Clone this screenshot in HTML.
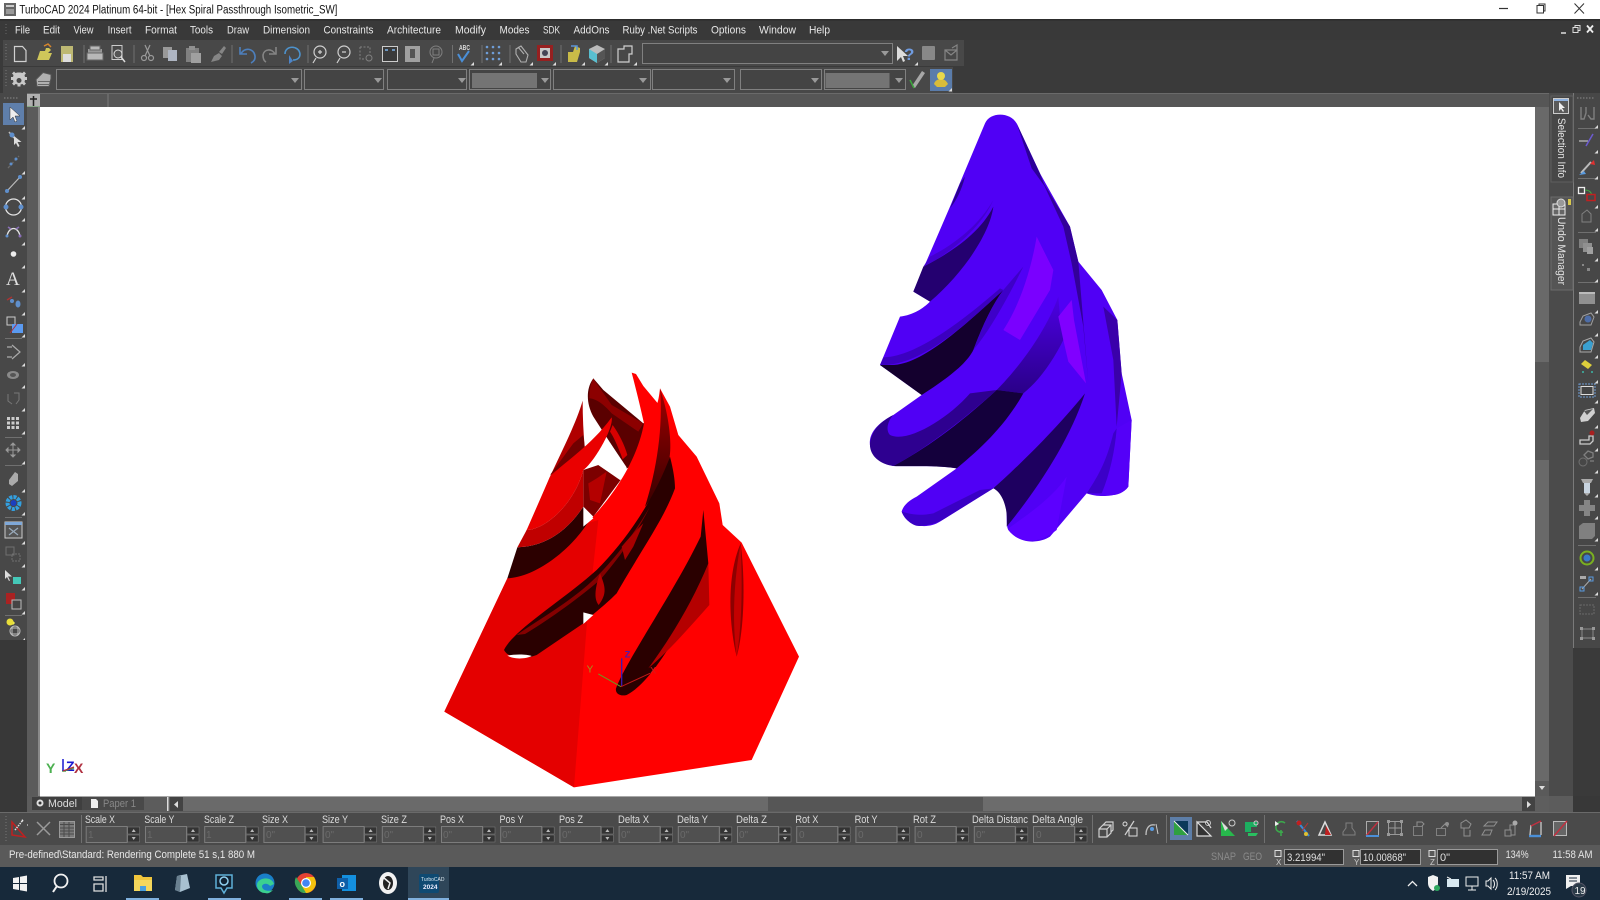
<!DOCTYPE html>
<html><head><meta charset="utf-8"><title>TurboCAD</title>
<style>
html,body{margin:0;padding:0;background:#3a3a3a;width:1600px;height:900px;overflow:hidden}
svg{display:block;font-family:"Liberation Sans",sans-serif;filter:blur(.35px)}
.m{font-size:11px;fill:#e8e8e8}
.l{font-size:11px;fill:#dcdcdc}
.d{font-size:10px;fill:#6a6a6a}
.s{stroke:#d0d0d0;fill:none;stroke-width:1.2}
.g{stroke:#9a9a9a;fill:none;stroke-width:1.2}
.sep{stroke:#707070;stroke-width:1}
.cb{fill:#444;stroke:#808080;stroke-width:1}
.in{fill:#505050;stroke:#7c7c7c;stroke-width:1}
.sp{fill:#333;stroke:#777;stroke-width:.6}
</style></head><body>
<svg width="1600" height="900" viewBox="0 0 1600 900" xmlns="http://www.w3.org/2000/svg">
<defs>
<path id="t" d="M0 0l-3.500 3.500h3.500z" fill="#ddd"/>
<g id="f"><rect class="in" x="0.500" y="0.500" width="41" height="16"/><rect class="sp" x="42" y="1" width="12" height="7"/><rect class="sp" x="42" y="9" width="12" height="7"/><path d="M48 3l-2 3h4zM48 14l-2-3h4z" fill="#bbb"/></g>
<path id="dn" d="M0 0h8l-4 5z" fill="#999"/>
<linearGradient id="pb" x1="0" y1="0" x2="0" y2="1"><stop offset="0" stop-color="#4c00e4"/><stop offset="1" stop-color="#2a0088"/></linearGradient>
<linearGradient id="rs" x1="0" y1="0" x2="0" y2="1"><stop offset="0" stop-color="#a00000"/><stop offset=".5" stop-color="#6a0000"/><stop offset="1" stop-color="#3a0000"/></linearGradient>
</defs>
<!-- base -->
<rect width="1600" height="900" fill="#3a3a3a"/>
<rect width="1600" height="19" fill="#fff"/>
<rect x="4" y="3" width="12" height="13" fill="#666"/><rect x="6" y="5" width="8" height="2" fill="#ccc"/><rect x="6" y="9" width="8" height="5" fill="#999"/>
<text x="19.400" y="13.500" font-size="11.500" fill="#111" textLength="318" lengthAdjust="spacingAndGlyphs">TurboCAD 2024 Platinum 64-bit - [Hex Spiral Passthrough Isometric_SW]</text>
<path d="M1499 8.500h9" stroke="#333" stroke-width="1.200"/>
<rect x="1537" y="5.500" width="6.500" height="7.500" fill="none" stroke="#333"/><path d="M1539 5.500v-1.500h6v7h-1.500" fill="none" stroke="#333"/>
<path d="M1574.500 3.500l9.500 10M1584 3.500l-9.500 10" stroke="#333"/>
<!-- menu -->
<rect y="19" width="1600" height="21" fill="#393939"/>
<rect y="19" width="1600" height="1.500" fill="#2c2c2c"/>
<path d="M6 24v12" stroke="#666" stroke-dasharray="1 2"/>
<g class="m">
<text x="15" y="33.500" textLength="15" lengthAdjust="spacingAndGlyphs">File</text>
<text x="43" y="33.500" textLength="17" lengthAdjust="spacingAndGlyphs">Edit</text>
<text x="73.500" y="33.500" textLength="20" lengthAdjust="spacingAndGlyphs">View</text>
<text x="107.600" y="33.500" textLength="24" lengthAdjust="spacingAndGlyphs">Insert</text>
<text x="145" y="33.500" textLength="32" lengthAdjust="spacingAndGlyphs">Format</text>
<text x="190" y="33.500" textLength="23" lengthAdjust="spacingAndGlyphs">Tools</text>
<text x="227" y="33.500" textLength="22" lengthAdjust="spacingAndGlyphs">Draw</text>
<text x="263" y="33.500" textLength="47" lengthAdjust="spacingAndGlyphs">Dimension</text>
<text x="323.500" y="33.500" textLength="50" lengthAdjust="spacingAndGlyphs">Constraints</text>
<text x="387" y="33.500" textLength="54" lengthAdjust="spacingAndGlyphs">Architecture</text>
<text x="455" y="33.500" textLength="31" lengthAdjust="spacingAndGlyphs">Modify</text>
<text x="499.500" y="33.500" textLength="30" lengthAdjust="spacingAndGlyphs">Modes</text>
<text x="543" y="33.500" textLength="17" lengthAdjust="spacingAndGlyphs">SDK</text>
<text x="573.500" y="33.500" textLength="36" lengthAdjust="spacingAndGlyphs">AddOns</text>
<text x="622.500" y="33.500" textLength="75" lengthAdjust="spacingAndGlyphs">Ruby .Net Scripts</text>
<text x="711" y="33.500" textLength="35" lengthAdjust="spacingAndGlyphs">Options</text>
<text x="759" y="33.500" textLength="37" lengthAdjust="spacingAndGlyphs">Window</text>
<text x="809" y="33.500" textLength="21" lengthAdjust="spacingAndGlyphs">Help</text>
</g>
<path d="M1561 33h5" stroke="#ddd" stroke-width="1.500"/>
<rect x="1573" y="27.500" width="5" height="5" fill="none" stroke="#ddd"/><path d="M1575 27.500v-2h5v5h-2" fill="none" stroke="#ddd"/>
<path d="M1587 25.500l6 7M1593 25.500l-6 7" stroke="#eee" stroke-width="1.800"/>
<!-- toolbar rows -->
<rect x="3" y="40" width="961" height="26" fill="#484848"/>
<rect x="3" y="67" width="950" height="26" fill="#484848"/>
<path d="M6 44v18M6 70v18" stroke="#777" stroke-dasharray="1 2"/>
<!-- row1 icons -->
<path class="s" d="M14.500 46.500h8l3.500 4v11h-11.500z"/>
<path d="M37 60l3-9h5l1-3h3l2 2-3 3h4l-3 7z" fill="#cfc65a"/><path d="M44 46l4-2 3 3" stroke="#d8862c" fill="none" stroke-width="1.500"/>
<rect x="61" y="46" width="12" height="16" fill="#bdb873"/><rect x="63" y="54" width="8" height="8" fill="#ddd"/>
<path d="M88 49h14v5h-14z" fill="#999"/><path d="M90 46h10v4h-10zM87 53h16v7h-16z" fill="#b8b8b8" stroke="#666"/>
<rect x="112" y="45.500" width="10" height="14" fill="none" stroke="#ccc"/><circle cx="118" cy="54" r="4" fill="#555" stroke="#ddd"/><path d="M121 57l4 5" stroke="#ddd" stroke-width="1.500"/>
<g class="g"><circle cx="144" cy="58" r="2.500"/><circle cx="151" cy="58" r="2.500"/><path d="M145 56l5-11M150 56l-5-11"/></g>
<rect x="163" y="47" width="9" height="11" fill="#999"/><rect x="168" y="50" width="9" height="11" fill="#aeb5c2"/>
<rect x="186" y="48" width="13" height="14" fill="#808080"/><rect x="191" y="53" width="10" height="10" fill="#a0a0a0"/><rect x="189" y="46" width="6" height="4" fill="#909090"/>
<path d="M211 62l3-6 5-3 3 3-3 4zM219 52l5-6 2 2-4 6z" fill="#858585"/>
<path d="M240 47v7h7M241 54c3-7 13-6 14 2 .5 4-2 6-4 7" fill="none" stroke="#4d7fbc" stroke-width="1.600"/>
<path d="M276 47v7h-7M275 54c-3-6-11-5-12 1 0 4 1 6 3 7" fill="none" stroke="#858585" stroke-width="1.600"/>
<path d="M285 54c0-9 14-9 15 0 0 4-3 6-7 6" fill="none" stroke="#4d92cc" stroke-width="1.600"/><path d="M289 55l4 6-4 3z" fill="#4d84c8"/>
<g class="s"><circle cx="320" cy="52" r="6"/><path d="M316 58l-3 5M318 52h4M320 50v4"/><circle cx="344" cy="52" r="6"/><path d="M340 58l-3 5M342 52h4"/></g>
<path d="M360 47h10v6M360 47v12h5" fill="none" stroke="#808080" stroke-dasharray="2 1.500"/><circle cx="369" cy="58" r="3" fill="none" stroke="#808080"/>
<rect x="382.500" y="46.500" width="15" height="15" fill="#3a3a3a" stroke="#ccc"/><path d="M385 50h3M392 50h3" stroke="#7db3ea" stroke-width="1.500"/>
<rect x="405" y="46" width="15" height="16" fill="#a0a0a0"/><rect x="410" y="49" width="5" height="9" fill="#555"/>
<circle cx="436" cy="52" r="6" fill="none" stroke="#808080"/><rect x="433" y="49" width="6" height="6" fill="none" stroke="#808080"/><path d="M434 58l-2 5" stroke="#808080"/>
<text x="459" y="50" font-size="7" font-weight="bold" fill="#ddd" textLength="11" lengthAdjust="spacingAndGlyphs">ABC</text>
<path d="M458 54l4 7 7-10" fill="none" stroke="#4a8fd8" stroke-width="2"/>
<g fill="#6f9dd6"><circle cx="487" cy="47" r="1.300"/><circle cx="493" cy="47" r="1.300"/><circle cx="499" cy="47" r="1.300"/><circle cx="487" cy="53" r="1.300"/><circle cx="493" cy="53" r="1.300"/><circle cx="499" cy="53" r="1.300"/><circle cx="487" cy="59" r="1.300"/><circle cx="493" cy="59" r="1.300"/><circle cx="499" cy="59" r="1.300"/></g>
<path d="M516 49l5-3 7 9-2 7h-5l-5-8zM518 47l6 7" fill="none" stroke="#b0b0b0" stroke-width="1.100"/>
<rect x="537" y="45" width="16" height="16" fill="#962020"/><rect x="540" y="48" width="10" height="10" fill="#c8c8c8"/><circle cx="545" cy="53" r="3" fill="#445"/>
<path d="M568 52h5l2-6 5 2v4l-3 10h-9z" fill="#c9bb48"/><path d="M571 46h6v4" stroke="#5a94d8" fill="none" stroke-width="1.500"/>
<path d="M597 45l8 4v9l-8 5-8-5v-9z" fill="#bbb"/><path d="M597 54l-8-5v9l8 5z" fill="#58bfd0"/><path d="M597 54v9l8-5v-9z" fill="#555"/>
<path class="s" d="M618 49h6v-3h8v8h-3v8h-11z"/>
<g><use href="#t" x="474" y="62"/><use href="#t" x="502" y="62"/><use href="#t" x="533" y="62"/><use href="#t" x="556" y="62"/><use href="#t" x="585" y="62"/><use href="#t" x="608" y="62"/><use href="#t" x="637" y="62"/><use href="#t" x="918" y="62"/></g>
<g class="sep"><path d="M84 45v18M134 45v18M232 45v18M308 45v18M452.500 45v18M482 45v18M510 45v18M561 45v18M611 45v18"/></g>
<rect x="642.500" y="43.500" width="250" height="20" class="cb"/><use href="#dn" x="881" y="51"/>
<path d="M897 46v15l4-4 2 5 2-1-2-5h5z" fill="#ddd"/>
<text x="904" y="60" font-size="17" font-weight="bold" fill="#6f9be0">?</text>
<rect x="922" y="46" width="13" height="14" rx="1" fill="#888"/>
<path d="M945 50h12v10h-12zM945 50l6 5 6-5M952 48l5-3v5" fill="none" stroke="#858585" stroke-width="1.200"/>
<!-- row2 -->
<g transform="translate(0 1.500)"><path d="M19.500 72l2 .5 1.500-1.500 2 2-1.500 1.500.5 2 2 0v3l-2 0-.5 2 1.500 1.500-2 2-1.500-1.500-2 .5v2h-3v-2l-2-.5-1.500 1.500-2-2 1.500-1.500-.5-2h-2v-3h2l.5-2-1.500-1.500 2-2 1.500 1.500 2-.5z" fill="#c8c8c8" transform="translate(1 -1)"/><circle cx="19" cy="79" r="2.500" fill="#484848"/>
<path d="M36 78l7-7 8 2v4l-2 8h-12z" fill="#b0b0b0" stroke="#555"/><path d="M38 80h12M38 83h12" stroke="#666"/></g>
<rect class="cb" x="56.500" y="69.500" width="245" height="20"/><use href="#dn" x="291" y="78"/>
<rect class="cb" x="304.500" y="69.500" width="79" height="20"/><use href="#dn" x="374" y="78"/>
<rect class="cb" x="387.500" y="69.500" width="79" height="20"/><use href="#dn" x="458" y="78"/>
<rect class="cb" x="469.500" y="69.500" width="81" height="20"/><rect x="472" y="73" width="65" height="15" fill="#747474"/><use href="#dn" x="541" y="78"/>
<rect class="cb" x="553.500" y="69.500" width="97" height="20"/><use href="#dn" x="639" y="78"/>
<rect class="cb" x="652.500" y="69.500" width="82" height="20"/><use href="#dn" x="723" y="78"/>
<rect class="cb" x="740.500" y="69.500" width="81" height="20"/><use href="#dn" x="811" y="78"/>
<rect class="cb" x="824.500" y="69.500" width="81" height="20"/><rect x="825.500" y="73" width="64" height="15" fill="#747474"/><use href="#dn" x="895" y="78"/>
<path d="M912 86l10-15 3 2-10 15z" fill="#a8a8a8"/><path d="M910 80l4 8" stroke="#3ca83c" stroke-width="1.500"/>
<rect x="930" y="69" width="22" height="22" fill="#5a7cab"/><path d="M934 84c1-4 5-5 7-5s5 1 7 5l-3 3h-8z" fill="#d8bc3a"/><circle cx="941" cy="76" r="4" fill="#e8d84c"/><use href="#t" x="952" y="88"/>
<!-- ruler strip -->
<rect y="94" width="1600" height="13" fill="#565656"/>
<rect y="93" width="1600" height="1" fill="#6a6a6a"/>
<path d="M108 94v13" stroke="#7a7a7a"/>
<rect x="27" y="94" width="13" height="13" fill="#b0b0b0"/><path d="M33.500 96v10M30 99h7" stroke="#222" stroke-width="1.500"/>
<path d="M27 107h13" stroke="#5ca05c"/>
<!-- left toolbar -->
<rect x="0" y="93" width="27" height="547" fill="#484848"/>
<rect x="27" y="107" width="13" height="689" fill="#5b5b5b"/>
<rect x="38" y="107" width="2" height="689" fill="#8a8a8a"/>
<path d="M4 98h14" stroke="#888" stroke-dasharray="1.500 1.500"/>
<rect x="3" y="103" width="21" height="22" fill="#5f7fab"/>
<path d="M10 107v13l3-3 2 5 2-1-2-5h5z" fill="#eee" stroke="#333" stroke-width=".5"/>
<path d="M9 132l5 6" stroke="#bbb" stroke-width="1.500"/><circle cx="12" cy="135" r="2.500" fill="#5f8fcc"/><path d="M14 136v9l2-2 2 4 1.500-1-2-4h4z" fill="#ddd"/>
<path d="M8 168l11-12" stroke="#6a6a6a" stroke-dasharray="3 2" stroke-width="1.300"/><circle cx="11" cy="164" r="1.500" fill="#5f8fcc"/><circle cx="16" cy="159" r="1.500" fill="#5f8fcc"/>
<path d="M7 191l13-14" stroke="#bbb" stroke-width="1.200"/><circle cx="7" cy="191" r="2" fill="#5f8fcc"/><circle cx="20" cy="177" r="2" fill="#5f8fcc"/>
<circle cx="13.500" cy="207" r="8" fill="none" stroke="#e4e4e4" stroke-width="1.300"/><circle cx="6" cy="207" r="2.500" fill="#5f8fcc"/><circle cx="21" cy="207" r="2.500" fill="#5f8fcc"/>
<path d="M7 236c2-10 11-10 13 0" fill="none" stroke="#e4e4e4" stroke-width="1.300"/><path d="M8 227l3 2M19 227l-3 2" stroke="#8a6fb8" stroke-width="1.600"/><circle cx="7" cy="236" r="1.500" fill="#5f8fcc"/><circle cx="20" cy="236" r="1.500" fill="#8a6fb8"/>
<circle cx="13.500" cy="254" r="2.800" fill="#eee"/>
<text x="6" y="285" font-family="Liberation Serif" font-size="19" fill="#e0e0e0">A</text>
<path d="M7 300l5-3" stroke="#a33" stroke-width="1.500"/><circle cx="12" cy="301" r="2" fill="#5f8fcc"/><ellipse cx="18" cy="304" rx="2.500" ry="3.500" fill="#5f8fcc"/>
<rect x="7" y="317" width="8" height="8" fill="none" stroke="#ccc"/><rect x="12" y="324" width="11" height="9" fill="#5b9af0"/><path d="M10 333l7-9" stroke="#b03040"/>
<path class="sep" d="M5 338.500h17M5 437.500h17M5 465.500h17M5 517.500h17M5 615.500h17"/>
<path d="M12 345l8 7-8 7M7 347h5M7 357h5" fill="none" stroke="#aaa" stroke-width="1.200"/>
<ellipse cx="13" cy="375" rx="6" ry="4" fill="#8a8a8a"/><ellipse cx="13" cy="375" rx="3" ry="2" fill="#555"/>
<path d="M8 394v7l4 3M14 393h5v7l-3 4" fill="none" stroke="#777"/>
<g fill="#ccc"><rect x="7" y="417" width="3" height="3"/><rect x="11.500" y="417" width="3" height="3"/><rect x="16" y="417" width="3" height="3"/><rect x="7" y="421.500" width="3" height="3"/><rect x="11.500" y="421.500" width="3" height="3"/><rect x="16" y="421.500" width="3" height="3"/><rect x="7" y="426" width="3" height="3"/><rect x="11.500" y="426" width="3" height="3"/><rect x="16" y="426" width="3" height="3"/></g>
<path d="M13 443v14M6 450h14M13 443l-2 2h4zM13 457l-2-2h4zM6 450l2-2v4zM20 450l-2-2v4z" stroke="#999" fill="#999"/>
<path d="M9 480l6-8 3 2v7l-6 5-3-2z" fill="#aaa"/>
<circle cx="13.500" cy="503" r="6" fill="none" stroke="#33a0e0" stroke-width="4" stroke-dasharray="3 1"/><circle cx="13.500" cy="503" r="3" fill="#1c3fc0"/>
<rect x="5" y="522" width="17" height="16" fill="#555" stroke="#ccc"/><rect x="5" y="522" width="17" height="3" fill="#7fa8d8"/><path d="M9 528l9 7M18 528l-9 7" stroke="#9ab" stroke-width="1.200"/>
<rect x="6" y="547" width="8" height="8" fill="none" stroke="#707070"/><rect x="12" y="554" width="8" height="7" fill="none" stroke="#707070" stroke-dasharray="2 1"/>
<path d="M5 570v9l2-2 2 4 1-.5-2-4h4z" fill="#ddd"/><rect x="13" y="577" width="8" height="7" fill="#45c8b8"/>
<rect x="6" y="593" width="9" height="11" fill="#a22"/><rect x="12" y="600" width="9" height="9" fill="#444" stroke="#bbb"/>
<path d="M10 620l4 4" stroke="#ee5" stroke-width="3"/><circle cx="10" cy="622" r="3.500" fill="#e8de3a"/><circle cx="15" cy="631" r="5" fill="none" stroke="#bbb"/><rect x="12" y="628" width="6" height="6" fill="none" stroke="#bbb"/>
<g><use href="#t" x="25" y="126"/><use href="#t" x="25" y="171"/><use href="#t" x="25" y="196"/><use href="#t" x="25" y="218"/><use href="#t" x="25" y="242"/><use href="#t" x="25" y="265"/><use href="#t" x="25" y="289"/><use href="#t" x="25" y="312"/><use href="#t" x="25" y="334"/><use href="#t" x="25" y="363"/><use href="#t" x="25" y="385"/><use href="#t" x="25" y="408"/><use href="#t" x="25" y="431"/><use href="#t" x="25" y="461"/><use href="#t" x="25" y="489"/><use href="#t" x="25" y="512"/><use href="#t" x="25" y="541"/><use href="#t" x="25" y="564"/><use href="#t" x="25" y="587"/><use href="#t" x="25" y="611"/><use href="#t" x="25" y="638"/></g>
<rect x="0" y="640" width="27" height="172" fill="#383838"/>
<!-- canvas -->
<rect x="40" y="107" width="1495" height="689" fill="#fff"/>
<!-- red object -->
<g transform="translate(430 360) scale(.33333)">
<path d="M490 55C468 85 468 130 490 170L590 325 700 280 690 160 640 190 520 90Z" fill="#5a0000"/>
<path d="M490 55C505 80 525 105 545 135L640 190 625 215 545 160C520 130 495 115 478 115 478 90 482 70 490 55Z" fill="#8c0000"/>
<path d="M548 195C566 220 584 255 592 285L578 298C566 265 552 232 540 215Z" fill="#d80000"/>
<path d="M605 38C620 95 632 145 642 190L700 150 640 78 618 42Z" fill="#ff0000"/>
<path d="M458 122C440 185 400 265 360 350L465 270C460 220 458 170 458 122Z" fill="#b00000"/>
<path d="M360 345L430 250 460 225 465 270Z" fill="#700000"/>
<path d="M505 315L572 360 490 470 460 440 460 330Z" fill="#7c0000"/>
<path d="M475 370C495 360 515 345 530 335L510 430 480 420Z" fill="#b40000"/>
<path d="M43 1055L432 1282 965 1200 1107 890 935 548 878 495 868 430 800 290 745 225 720 140 690 85C685 130 680 150 642 190 620 310 540 420 470 490L232 655Z" fill="#ff0000"/>
<path d="M43 1055L432 1282 470 800 505 480 470 490 232 655Z" fill="#e40000"/>
<path d="M360 350C440 330 530 240 545 172 520 230 440 300 290 510L232 655Z" fill="#e60000"/>
<path d="M545 172C552 205 490 310 460 330 430 440 340 510 290 510L360 350C410 300 480 260 545 172Z" fill="#ea0000"/>
<path d="M232 655C320 650 420 570 472 490L460 440C400 530 330 560 262 562Z" fill="#2c0000"/>
<path d="M262 562C330 560 400 530 460 440L460 330C430 440 340 510 290 510Z" fill="#c00000"/>
<path d="M540 248L590 322 570 360 505 315Z" fill="#fff"/>
<path d="M460 440L490 475 460 500Z" fill="#fff"/>
<path d="M690 85C722 180 725 265 718 295 700 360 670 410 645 440 680 330 700 200 690 85Z" fill="url(#rs)"/>
<path d="M222 870C250 810 400 720 500 630 600 530 680 400 720 290 730 330 735 360 735 385 700 480 640 560 560 700 520 740 490 760 460 790L320 885C280 900 235 895 222 870Z" fill="#2a0000"/>
<path d="M260 825C340 770 430 720 500 650 560 590 620 510 660 440 620 520 570 590 510 660 440 720 340 790 285 822Z" fill="#840000"/>
<path d="M575 560C600 530 620 510 640 490L610 560 585 600Z" fill="#a80000"/>
<path d="M510 640C526 680 532 700 506 735 490 716 496 680 510 640Z" fill="#b80000"/>
<path d="M232 887C255 882 290 882 305 888 285 898 250 898 232 887Z" fill="#fff"/>
<path d="M460 757L490 765 460 792Z" fill="#fff"/>
<path d="M558 985C590 900 730 700 812 530L820 450 835 610C800 730 680 960 590 1005 570 1010 555 1000 558 985Z" fill="#2a0000"/>
<path d="M655 925C725 830 790 720 835 610L838 735C780 800 720 870 655 925Z" fill="#b40000"/>
<path d="M920 890C898 800 888 650 932 550 945 650 945 800 920 890Z" fill="#8c0000"/>
<path d="M920 890C908 800 908 680 932 550 938 680 935 800 920 890Z" fill="#c40000"/>
<path d="M505 942L573 980" stroke="#6c9a20" stroke-width="3"/><path d="M575 978V895" stroke="#3a1ab0" stroke-width="4"/><path d="M573 980L660 940" stroke="#c01818" stroke-width="3"/>
<text x="470" y="938" font-size="30" fill="#9a9a20">Y</text><text x="584" y="893" font-size="28" font-weight="bold" fill="#4a1ab0">Z</text><text x="660" y="940" font-size="28" fill="#d02020">X</text>
</g>
<!-- purple object -->
<g transform="translate(850 100) scale(.33333)">
<path d="M405 70C420 35 480 35 500 70L570 220 660 380 685 485 755 570 802 660 815 820 845 960 835 1160C815 1190 750 1195 710 1180L600 1310C570 1330 510 1335 475 1290 465 1270 475 1230 465 1205 455 1180 440 1165 430 1165L270 1265C230 1290 170 1280 155 1235 160 1215 180 1200 200 1190L320 1105C250 1095 180 1100 130 1098 80 1090 55 1050 60 1020 65 985 100 960 130 945L215 885 90 795 150 650C190 645 220 625 240 605L190 575 300 320Z" fill="#5000f5"/>
<path d="M500 70L570 220 585 260 545 205Z" fill="#2c0098"/>
<path d="M575 240L660 380 685 485 715 850 700 680 665 490 640 380Z" fill="#33009a"/>
<path d="M760 620L802 660 815 820 800 980 790 780Z" fill="#3a00aa"/>
<path d="M800 985L845 960 835 1160C815 1190 770 1190 755 1180 780 1120 795 1050 800 985Z" fill="#5400f8"/>
<path d="M800 985C795 1050 780 1120 755 1180L710 1180C750 1120 770 1080 790 1000Z" fill="#3c00c8"/>
<path d="M345 230C335 270 320 300 300 325L330 250Z" fill="#2a0090"/>
<path d="M220 500C300 460 390 400 430 320 420 400 340 520 240 605L190 575Z" fill="#240070"/>
<path d="M240 470C320 430 390 370 430 300 400 370 320 450 220 500Z" fill="#4400d0"/>
<path d="M90 795L215 885C300 830 350 790 370 750 400 670 430 610 460 570 340 680 210 800 120 795Z" fill="#14002e"/>
<path d="M100 772C200 770 340 660 450 565L460 570C340 680 210 800 90 795Z" fill="#3c00c0"/>
<path d="M370 750C400 670 430 610 460 570L520 500C470 600 420 690 370 750Z" fill="#3e00c8"/>
<path d="M560 410L610 510 600 570C570 620 540 670 510 720L460 690C500 630 540 530 560 410Z" fill="#7a00ff"/>
<path d="M440 870C510 800 590 690 625 590L630 650 640 720C610 780 570 840 520 880Z" fill="url(#pb)"/>
<path d="M625 650L665 600 672 660 708 850 655 785 640 720Z" fill="#8000ff"/>
<path d="M130 1098C220 1050 320 980 440 870L520 880C470 970 400 1040 320 1105 250 1095 180 1100 130 1098Z" fill="#14003c"/>
<path d="M60 1030C65 985 100 960 130 945 115 960 105 990 120 1005 170 1030 290 960 360 880L440 870C340 960 220 1050 130 1098 80 1090 58 1060 60 1030Z" fill="#2e0090"/>
<path d="M430 1165C470 1130 600 1010 705 880 660 1020 560 1170 470 1280 475 1230 460 1180 430 1165Z" fill="#1e0060"/>
<path d="M475 1285C540 1240 610 1190 650 1130L620 1290C570 1330 510 1335 475 1290Z" fill="#5c00ff"/>
<path d="M155 1235C165 1260 190 1280 210 1278 240 1275 260 1270 280 1258L430 1165 390 1170 250 1240C200 1250 175 1240 155 1235Z" fill="#3a00c4"/>
</g>
<!-- triad -->
<g font-size="14" font-weight="bold"><text x="46" y="773" fill="#4cb050">Y</text><text x="66" y="771" fill="#1818d0">Z</text><text x="74" y="773" fill="#b03040">X</text></g>
<path d="M62 771h4M63 771l11-3" stroke="#4cb050" stroke-width="1.500"/><path d="M63 771v-12" stroke="#1818d0" stroke-width="1.500"/><path d="M63 771l11-4" stroke="#b03040" stroke-width="1.200"/>
<!-- vertical scrollbar -->
<rect x="1535" y="107" width="14" height="689" fill="#696969"/>
<rect x="1535" y="362" width="14" height="98" fill="#565656"/>
<rect x="1535" y="781" width="14" height="15" fill="#5a5a5a"/><path d="M1539 786h6l-3 4z" fill="#ddd"/>
<!-- right panel -->
<rect x="1549" y="93" width="24" height="719" fill="#4b4b4b"/>
<rect x="1573" y="93" width="1" height="555" fill="#7a7a7a"/>
<path d="M1551 96h22v86h-22z" fill="#474747" stroke="#5f5f5f"/>
<path d="M1551 290V197h22v93z" fill="#555" stroke="#6b6b6b"/>
<rect x="1553.500" y="98.500" width="15" height="15" fill="#5a5a5a" stroke="#ccc"/><rect x="1554" y="99" width="14" height="2" fill="#8fb2e0"/><path d="M1559 102v9l2-2 2 3 1-1-2-3h3z" fill="#eee"/>
<text transform="translate(1558 118) rotate(90)" font-size="11" fill="#e4e4e4" textLength="60" lengthAdjust="spacingAndGlyphs">Selection Info</text>
<text transform="translate(1558 217) rotate(90)" font-size="11" fill="#e4e4e4" textLength="68" lengthAdjust="spacingAndGlyphs">Undo Manager</text>
<rect x="1553" y="204" width="12" height="11" fill="#666" stroke="#eee"/><path d="M1553 209h12M1559 204v11" stroke="#eee"/><circle cx="1561" cy="203" r="4" fill="#999" stroke="#ddd"/><rect x="1568" y="199" width="3" height="6" fill="#d9c94c"/>
<!-- right toolbar -->
<rect x="1574" y="93" width="26" height="555" fill="#474747"/>
<path d="M1577 98h18" stroke="#888" stroke-dasharray="1.500 1.500"/>
<path d="M1581 107v12h3l2-6v-6M1594 107v12h-3l-3-4" fill="none" stroke="#808080" stroke-width="1.400"/>
<path d="M1579 141h9" stroke="#aaa" stroke-width="1.500"/><path d="M1586 146l7-12" stroke="#6c5ad0" stroke-width="1.500"/>
<path d="M1581 173l10-11" stroke="#bbb" stroke-width="2"/><path d="M1579 175l5-4 2 3z" fill="#5a9be0"/><path d="M1590 164l4-4 1 5z" fill="#e03030"/>
<rect x="1578.500" y="187.500" width="6" height="6" fill="none" stroke="#eee" stroke-width="1.300"/><path d="M1585 190c4 0 6 2 7 5" fill="none" stroke="#3ca83c"/><rect x="1587" y="194.500" width="8" height="6" fill="none" stroke="#c02020" stroke-width="1.500"/>
<path d="M1582 214l5-4 4 4v8h-9z" fill="none" stroke="#808080"/>
<rect x="1579" y="239" width="9" height="9" fill="#808080"/><rect x="1583" y="243" width="9" height="9" fill="#909090"/><rect x="1587" y="247" width="6" height="7" fill="#a0a0a0"/>
<rect x="1582" y="264" width="2" height="2" fill="#888"/><rect x="1587" y="268" width="3" height="3" fill="#888"/>
<rect x="1579" y="292" width="16" height="12" fill="#909090"/><rect x="1579" y="292" width="16" height="2" fill="#bbb"/>
<path d="M1580 322l3-6 8-3 3 4-3 8h-11z" fill="none" stroke="#a0a0a0"/><circle cx="1588" cy="319" r="3.500" fill="#4d6da8"/>
<path d="M1580 347l3-6 8-3 3 4-3 10h-11z" fill="none" stroke="#aaa"/><path d="M1583 345l7-5 3 3-2 7h-8z" fill="#3aa0d0"/>
<path d="M1581 364l4-4 7 5-4 4z" fill="#ddcf3c"/><circle cx="1583" cy="372" r="1" fill="#3cb8a8"/><circle cx="1592" cy="372" r="1" fill="#3cb8a8"/>
<rect x="1579" y="384" width="16" height="13" fill="none" stroke="#6f9dd6" stroke-dasharray="2 1"/><rect x="1581" y="386.500" width="12" height="8" fill="#444" stroke="#ddd"/>
<path d="M1580 418l5-8 9-2 1 5-7 8-7 1z" fill="#d0d0d0"/><path d="M1584 411l9-2-6 6z" fill="#555"/>
<path d="M1580 440h9v-4h4v5l-3 3h-10z" fill="none" stroke="#ccc" stroke-width="1.300"/><circle cx="1592" cy="433" r="2.500" fill="#a82020"/>
<circle cx="1583" cy="462" r="4" fill="none" stroke="#707070"/><path d="M1584 455l4-4 5 2v4l-5 2zM1590 461h4" fill="none" stroke="#808080" stroke-width="1.300"/>
<path d="M1581 479h12l-2 4h-8z" fill="#aaa"/><rect x="1584" y="483" width="6" height="10" fill="#c8d4e0"/><path d="M1584 493l3 3 3-3z" fill="#aaa"/>
<path d="M1584 500h6v5h5v6h-5v5h-6v-5h-5v-6h5z" fill="#858585"/>
<path d="M1579 526l4-3h12v13l-3 3h-13z" fill="#808080"/>
<circle cx="1587" cy="558" r="6.500" fill="none" stroke="#7ab020" stroke-width="2"/><circle cx="1587" cy="558" r="3.500" fill="#3a7ac8"/>
<path d="M1582 589l9-10" stroke="#aaa"/><rect x="1580" y="587" width="4" height="4" fill="none" stroke="#5a9be0"/><rect x="1589" y="577" width="4" height="4" fill="none" stroke="#5a9be0"/><path d="M1580 576h6v3h-6z" fill="#aaa"/>
<rect x="1580" y="605" width="14" height="9" fill="none" stroke="#6a6a6a" stroke-dasharray="2 1"/>
<rect x="1582" y="629" width="11" height="9" fill="none" stroke="#8a8a8a"/><g fill="#999"><rect x="1580" y="627" width="3" height="3"/><rect x="1592" y="627" width="3" height="3"/><rect x="1580" y="637" width="3" height="3"/><rect x="1592" y="637" width="3" height="3"/></g>
<path class="sep" d="M1578 128.500h18M1578 178.500h18M1578 232.500h18M1578 282.500h18M1578 545.500h18M1578 597.500h18"/>
<g><use href="#t" x="1598" y="125"/><use href="#t" x="1598" y="150"/><use href="#t" x="1598" y="176"/><use href="#t" x="1598" y="205"/><use href="#t" x="1598" y="228"/><use href="#t" x="1598" y="258"/><use href="#t" x="1598" y="279"/><use href="#t" x="1598" y="310"/><use href="#t" x="1598" y="333"/><use href="#t" x="1598" y="355"/><use href="#t" x="1598" y="380"/><use href="#t" x="1598" y="400"/><use href="#t" x="1598" y="425"/><use href="#t" x="1598" y="448"/><use href="#t" x="1598" y="470"/><use href="#t" x="1598" y="494"/><use href="#t" x="1598" y="516"/><use href="#t" x="1598" y="538"/><use href="#t" x="1598" y="567"/><use href="#t" x="1598" y="592"/></g>
<!-- tab bar / h scrollbar -->
<rect x="27" y="796" width="1573" height="16" fill="#5c5c5c"/>
<rect x="0" y="796" width="27" height="16" fill="#383838"/>
<rect x="40" y="796" width="1495" height="1" fill="#a8a8a8"/>
<rect x="32" y="797" width="50" height="13" fill="#3f3f3f"/>
<rect x="82" y="797" width="62" height="13" fill="#494949"/>
<circle cx="40" cy="803" r="3.500" fill="#ddd"/><circle cx="40" cy="803" r="1.500" fill="#333"/>
<text x="48" y="807" font-size="11" fill="#ddd" textLength="29" lengthAdjust="spacingAndGlyphs">Model</text>
<path d="M91 799h5l2 2v7h-7z" fill="#eee"/>
<text x="103" y="807" font-size="11" fill="#888" textLength="33" lengthAdjust="spacingAndGlyphs">Paper 1</text>
<rect x="167" y="797" width="1.500" height="14" fill="#ddd"/>
<rect x="170" y="797" width="13" height="14" fill="#434343"/><path d="M178 801l-4 3.500 4 3.500z" fill="#ddd"/>
<rect x="183" y="797" width="585" height="14" fill="#6a6a6a"/>
<rect x="768" y="797" width="215" height="14" fill="#565656"/>
<rect x="983" y="797" width="539" height="14" fill="#6c6c6c"/>
<rect x="1522" y="797" width="13" height="14" fill="#434343"/><path d="M1527 801l4 3.500-4 3.500z" fill="#ddd"/>
<rect x="1535" y="796" width="14" height="16" fill="#5e5e5e"/>
<rect x="1573" y="796" width="27" height="16" fill="#383838"/>
<!-- property toolbar -->
<rect y="812" width="1600" height="33" fill="#4a4a4a"/>
<rect y="812" width="1600" height="1" fill="#6a6a6a"/>
<path d="M6 816v26" stroke="#777" stroke-dasharray="1 2"/>
<path d="M12 822l0 13 13 2z" fill="none" stroke="#c02020" stroke-width="1.500"/><path d="M15 830l8-10" stroke="#ddd" stroke-width="1.500" stroke-dasharray="1.500 1"/><path d="M22 819l1.500 2-2 1zM27 824l1 1-1 1z" fill="#eee"/>
<path d="M37 822l13 13M50 822l-13 13" stroke="#9a9a9a" stroke-width="1.500"/>
<rect x="59.500" y="821.500" width="15" height="16" fill="#7a7a7a" stroke="#999"/><path d="M60 824.500h14M60 828h14M60 831h14M60 834h14M64 822v15M69 822v15" stroke="#4a4a4a"/>
<path class="sep" d="M81.500 815v28"/>
<g class="l">
<text x="85" y="823" textLength="30" lengthAdjust="spacingAndGlyphs">Scale X</text>
<text x="144.400" y="823" textLength="30" lengthAdjust="spacingAndGlyphs">Scale Y</text>
<text x="204" y="823" textLength="30" lengthAdjust="spacingAndGlyphs">Scale Z</text>
<text x="262" y="823" textLength="26" lengthAdjust="spacingAndGlyphs">Size X</text>
<text x="322" y="823" textLength="26" lengthAdjust="spacingAndGlyphs">Size Y</text>
<text x="381" y="823" textLength="26" lengthAdjust="spacingAndGlyphs">Size Z</text>
<text x="440" y="823" textLength="24" lengthAdjust="spacingAndGlyphs">Pos X</text>
<text x="499.500" y="823" textLength="24" lengthAdjust="spacingAndGlyphs">Pos Y</text>
<text x="559" y="823" textLength="24" lengthAdjust="spacingAndGlyphs">Pos Z</text>
<text x="618" y="823" textLength="31" lengthAdjust="spacingAndGlyphs">Delta X</text>
<text x="677" y="823" textLength="31" lengthAdjust="spacingAndGlyphs">Delta Y</text>
<text x="736" y="823" textLength="31" lengthAdjust="spacingAndGlyphs">Delta Z</text>
<text x="795.400" y="823" textLength="23" lengthAdjust="spacingAndGlyphs">Rot X</text>
<text x="854.600" y="823" textLength="23" lengthAdjust="spacingAndGlyphs">Rot Y</text>
<text x="913" y="823" textLength="23" lengthAdjust="spacingAndGlyphs">Rot Z</text>
<text x="972" y="823" textLength="56" lengthAdjust="spacingAndGlyphs">Delta Distanc</text>
<text x="1032" y="823" textLength="51" lengthAdjust="spacingAndGlyphs">Delta Angle</text>
</g>
<use href="#f" x="85.700" y="826"/><use href="#f" x="145" y="826"/><use href="#f" x="204.200" y="826"/><use href="#f" x="263.400" y="826"/><use href="#f" x="322.600" y="826"/><use href="#f" x="381.800" y="826"/><use href="#f" x="441" y="826"/><use href="#f" x="500.200" y="826"/><use href="#f" x="559.400" y="826"/><use href="#f" x="618.600" y="826"/><use href="#f" x="677.800" y="826"/><use href="#f" x="737" y="826"/><use href="#f" x="796.200" y="826"/><use href="#f" x="855.400" y="826"/><use href="#f" x="914.600" y="826"/><use href="#f" x="973.800" y="826"/><use href="#f" x="1033" y="826"/>
<g class="d"><text x="88" y="838">1</text><text x="147" y="838">1</text><text x="206" y="838">1</text><text x="266" y="838">0"</text><text x="325" y="838">0"</text><text x="384" y="838">0"</text><text x="443" y="838">0"</text><text x="502" y="838">0"</text><text x="562" y="838">0"</text><text x="621" y="838">0"</text><text x="680" y="838">0"</text><text x="739" y="838">0"</text><text x="799" y="838">0</text><text x="858" y="838">0</text><text x="917" y="838">0</text><text x="976" y="838">0"</text><text x="1036" y="838">0</text></g>
<path class="sep" d="M1092.500 815v28M1166.500 815v28M1264.500 815v28"/>
<!-- bottom right icons -->
<path class="s" d="M1099 829l4-4h8v8l-4 4h-8zM1099 829h8v8M1107 829l4-4M1103 825l3-3h7v8l-2 2"/>
<path class="s" d="M1125 835l9-14"/><circle cx="1125" cy="824" r="2" fill="none" stroke="#ddd"/><rect x="1129" y="828" width="8" height="8" fill="none" stroke="#ddd"/>
<path d="M1146 835c0-8 4-11 9-10" fill="none" stroke="#bbb" stroke-width="1.400"/><circle cx="1152" cy="829" r="2" fill="#5a9be0"/><path d="M1156 824l2 10" stroke="#ccc"/>
<rect x="1170" y="817" width="22" height="23" fill="#5d7ea8"/>
<rect x="1174" y="821" width="14" height="14" fill="#1cb08c"/><path d="M1174 821v14h14z" fill="#2ea040"/><path d="M1174 821h14v14z" fill="#0a3a5a"/><path d="M1174 821l14 14" stroke="#eee"/>
<path d="M1197 822v14h14zM1197 822h10l4 6" fill="#333" stroke="#ddd" stroke-width="1.200"/><circle cx="1208" cy="823" r="2.500" fill="none" stroke="#ccc"/>
<path d="M1221 821v15h14z" fill="#27b84c"/><path d="M1221 821l7 7-3 3z" fill="#ddd"/><circle cx="1232" cy="823" r="3" fill="none" stroke="#ccc"/>
<path d="M1245 822h12v5h-6v5h-6z" fill="#1cae60"/><path d="M1248 836h8l2-3h-10z" fill="#2abf60"/><circle cx="1256" cy="823" r="2" fill="none" stroke="#ccc"/>
<path d="M1285 823c-4-3-10 0-9 5 0 3 4 5 7 4M1281 830v6" fill="none" stroke="#3ca84c" stroke-width="1.600"/><path d="M1275 821l4 3-4 2z" fill="#eee"/>
<path d="M1297 821l12 15" stroke="#3a8ad8" stroke-width="2"/><circle cx="1299" cy="823" r="2.500" fill="#c02020"/><circle cx="1306" cy="834" r="2" fill="#e0c030"/><path d="M1308 823l-6 8" stroke="#bb3333"/>
<path d="M1325 822l-6 13h12z" fill="none" stroke="#ddd" stroke-width="1.500"/><path d="M1326 826l5 9h-6z" fill="#c02020"/>
<path d="M1343 832l3-4v-5h6v5l3 4v3h-12z" fill="none" stroke="#808080"/>
<rect x="1366.500" y="821.500" width="12" height="14" fill="none" stroke="#aaa"/><path d="M1366 836l12-14" stroke="#c03040" stroke-width="1.400"/><path d="M1366 836h13" stroke="#4a8fd8" stroke-width="2"/>
<rect x="1388.500" y="821.500" width="13" height="13" fill="none" stroke="#999"/><path d="M1395 821v14M1388 828h14" stroke="#999"/><g fill="#999"><rect x="1387" y="820" width="3" height="3"/><rect x="1400" y="820" width="3" height="3"/><rect x="1387" y="833" width="3" height="3"/><rect x="1400" y="833" width="3" height="3"/></g>
<rect x="1413.500" y="826.500" width="9" height="9" fill="none" stroke="#808080"/><path d="M1417 826v-4h5l2 2-2 2" fill="none" stroke="#909090"/>
<rect x="1436.500" y="828.500" width="9" height="7" fill="none" stroke="#808080"/><path d="M1441 828l4-4 3 3" fill="none" stroke="#909090"/><circle cx="1447" cy="824" r="2" fill="#909090"/>
<path d="M1461 823l5-3 5 4-2 4h-8zM1464 828v8h6v-6" fill="none" stroke="#909090"/>
<path d="M1484 826l4-4h9l-3 4zM1485 830h7l-2 5h-8z" fill="none" stroke="#909090"/>
<rect x="1505" y="830" width="6" height="6" fill="none" stroke="#909090"/><path d="M1510 830v-5h5v10h-4" fill="none" stroke="#909090"/><circle cx="1515" cy="823" r="2.500" fill="#aaa"/>
<path d="M1529 836h12" stroke="#4a8fd8" stroke-width="2.400"/><path d="M1530 835l1-10M1541 835v-13" stroke="#ccc" stroke-width="1.300"/><path d="M1531 826l10-5" stroke="#c03040" stroke-width="1.500"/>
<rect x="1553.500" y="821.500" width="13" height="14" fill="#666" stroke="#bbb"/><path d="M1554 836l13-15" stroke="#c03040" stroke-width="1.500"/>
<!-- status bar -->
<rect y="845" width="1600" height="22" fill="#5a5a5a"/>
<text x="9" y="858" font-size="11" fill="#e8e8e8" textLength="246" lengthAdjust="spacingAndGlyphs">Pre-defined\Standard: Rendering Complete 51 s,1 880 M</text>
<text x="1211" y="860" font-size="11" fill="#8a8a8a" textLength="25" lengthAdjust="spacingAndGlyphs">SNAP</text>
<text x="1243" y="860" font-size="11" fill="#8a8a8a" textLength="19" lengthAdjust="spacingAndGlyphs">GEO</text>
<rect x="1275" y="850.500" width="6" height="6" fill="none" stroke="#ddd"/><text x="1276" y="865" font-size="8" fill="#ccc">X</text>
<rect x="1284.500" y="849.500" width="59" height="15" fill="#313131" stroke="#9a9a9a"/>
<text x="1287" y="861" font-size="11" fill="#e0e0e0" textLength="38" lengthAdjust="spacingAndGlyphs">3.21994"</text>
<rect x="1353" y="850.500" width="6" height="6" fill="none" stroke="#ddd"/><text x="1354" y="865" font-size="8" fill="#ccc">Y</text>
<rect x="1360.500" y="849.500" width="60" height="15" fill="#313131" stroke="#9a9a9a"/>
<text x="1363" y="861" font-size="11" fill="#e0e0e0" textLength="43" lengthAdjust="spacingAndGlyphs">10.00868"</text>
<rect x="1429" y="850.500" width="6" height="6" fill="none" stroke="#ddd"/><text x="1430" y="865" font-size="8" fill="#ccc">Z</text>
<rect x="1437.500" y="849.500" width="60" height="15" fill="#313131" stroke="#9a9a9a"/>
<text x="1440" y="861" font-size="11" fill="#e0e0e0">0"</text>
<text x="1505.600" y="858" font-size="11" fill="#e4e4e4" textLength="23" lengthAdjust="spacingAndGlyphs">134%</text>
<text x="1552.500" y="858" font-size="11" fill="#e4e4e4" textLength="40" lengthAdjust="spacingAndGlyphs">11:58 AM</text>
<!-- taskbar -->
<rect y="867" width="1600" height="33" fill="#17293a"/>
<g fill="#f2f2f2"><path d="M13 878l6-1v6h-6zM20 876.700l7-1.200v7.500h-7zM13 884h6v6l-6-1zM20 884h7v7.500l-7-1.200z"/></g>
<circle cx="61" cy="881" r="6.500" fill="none" stroke="#f2f2f2" stroke-width="1.800"/><path d="M57 886l-4 6" stroke="#f2f2f2" stroke-width="2"/>
<path d="M94 877h9v3h-9zM94 884h9v7h-9zM106 876v16" fill="none" stroke="#ddd" stroke-width="1.300"/>
<path d="M134 875h7l2 2h9v5h-18z" fill="#f0c53c"/><rect x="134" y="880" width="18" height="11" fill="#f5d75c"/><rect x="140" y="886" width="6" height="5" fill="#4aa0e0"/>
<path d="M177 876l10-2 3 14-10 4-5-2z" fill="#a8c0d0"/><path d="M177 876l-2 14 5 2 1-16z" fill="#6a8090"/>
<path d="M216 875h16v13h-5l-3 5-3-5h-5z" fill="#123" stroke="#5fb0d8" stroke-width="1.500"/><circle cx="224" cy="881" r="4" fill="none" stroke="#8fd0f0" stroke-width="1.500"/>
<circle cx="265" cy="883" r="9.500" fill="#1a7fc8"/><path d="M257 885c0-7 14-10 17-1l-4 2c-2-3-7-3-8 0 0 4 5 6 11 4-3 3-5 4-8 3-5 0-8-4-8-8z" fill="#3bd090"/>
<circle cx="306" cy="883" r="10" fill="#e34234"/><path d="M306 883l-9 5a10 10 0 0 0 9 5c5 0 10-5 10-10 0-2-1-4-2-6h-8z" fill="#f4c20d"/><path d="M297 888a10 10 0 0 1-1-11l6 9 4 7a10 10 0 0 1-9-5z" fill="#3aa757"/><circle cx="306" cy="883" r="5" fill="#fff"/><circle cx="306" cy="883" r="3.800" fill="#4285f4"/>
<rect x="342" y="875" width="14" height="16" fill="#1490df"/><rect x="337" y="878" width="11" height="11" fill="#0f5fa8"/><text x="339.500" y="887" font-size="9" font-weight="bold" fill="#fff">o</text>
<ellipse cx="388" cy="883" rx="9" ry="11" fill="#f2f2f2"/><ellipse cx="388" cy="883" rx="5" ry="7" fill="#222"/><path d="M384 878l6 5-2 6" stroke="#eee" stroke-width="1.500" fill="none"/>
<rect x="408" y="867" width="41" height="33" fill="#2f4659"/>
<rect x="419" y="874" width="20" height="19" rx="2" fill="#0f4a72"/>
<text x="421" y="881" font-size="5" fill="#dbe8f0">TurboCAD</text><text x="423" y="889" font-size="6.500" font-weight="bold" fill="#eef">2024</text>
<g fill="#80b0dd"><rect x="126" y="898" width="33" height="2"/><rect x="208" y="898" width="33" height="2"/><rect x="289" y="898" width="33" height="2"/><rect x="330" y="898" width="33" height="2"/><rect x="408" y="898" width="41" height="2"/></g>
<path d="M1408 886l4.500-4.500 4.500 4.500" fill="none" stroke="#eee" stroke-width="1.300"/>
<path d="M1428 877l5-2 5 2v6c0 4-2 6-5 8-3-2-5-4-5-8z" fill="#f2f2f2"/><circle cx="1437" cy="888" r="3" fill="#2fa860"/>
<rect x="1447" y="879" width="12" height="8" fill="#d8e8f0"/><path d="M1447 877l4 2" stroke="#eee"/>
<rect x="1466" y="877" width="12" height="9" fill="none" stroke="#eee"/><path d="M1472 886v4M1468 890h8" stroke="#eee"/>
<path d="M1486 881h2l3-3v11l-3-3h-2z" fill="none" stroke="#eee"/><path d="M1493 880c2 2 2 6 0 8M1495 878c3 3 3 9 0 12" fill="none" stroke="#eee"/>
<text x="1509" y="879" font-size="11" fill="#f0f0f0" textLength="41" lengthAdjust="spacingAndGlyphs">11:57 AM</text>
<text x="1507" y="895" font-size="11" fill="#f0f0f0" textLength="44" lengthAdjust="spacingAndGlyphs">2/19/2025</text>
<path d="M1566 875h14v11h-9l-5 3z" fill="#f0f0f0"/><path d="M1569 878h8M1569 881h8" stroke="#17293a"/>
<circle cx="1579" cy="890" r="7" fill="#2a3a48" stroke="#556"/><text x="1574.500" y="894" font-size="10" fill="#eee">19</text>
</svg>
</body></html>
